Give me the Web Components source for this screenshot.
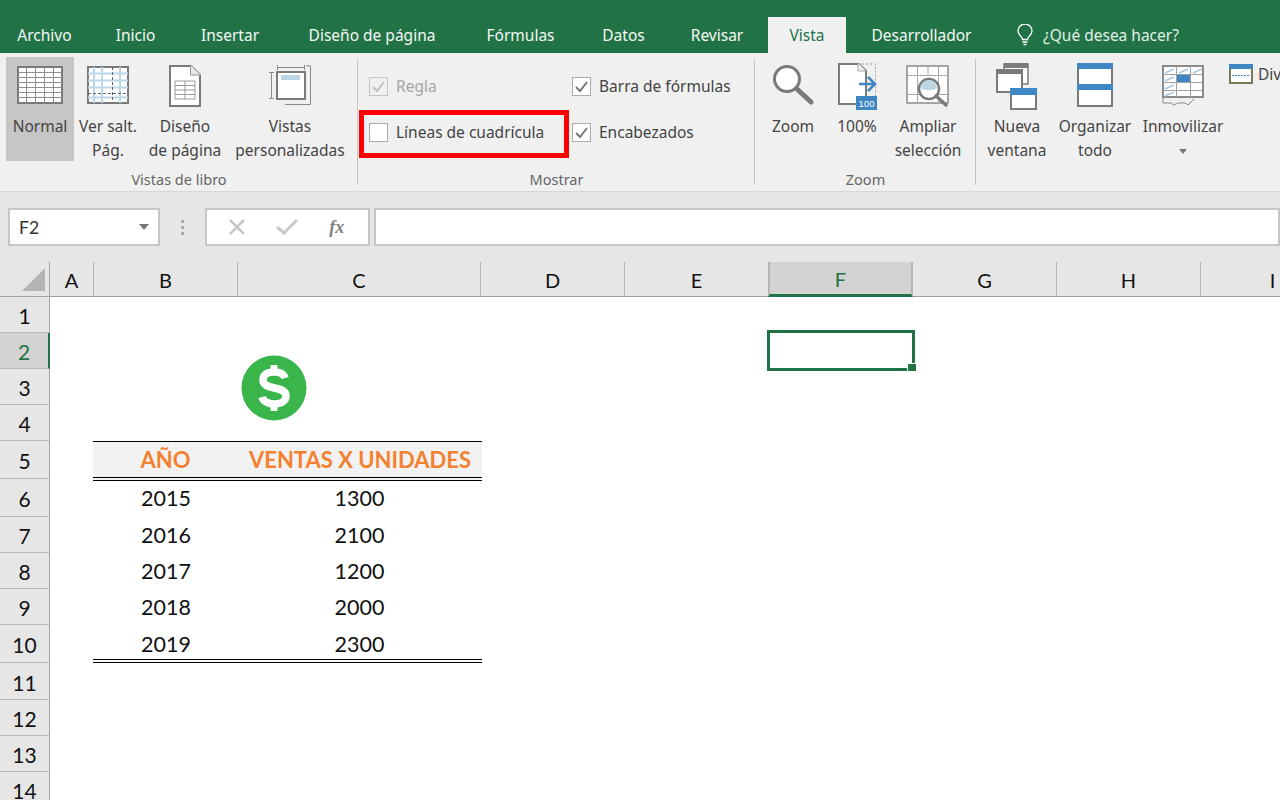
<!DOCTYPE html>
<html lang="es">
<head>
<meta charset="utf-8">
<title>Vista</title>
<style>
  html, body { margin: 0; height: 100%; overflow: hidden; background: #fff; }
  body { font-family: "Noto Sans", "Open Sans", sans-serif; display: flex; flex-direction: column; width: 1280px; height: 800px; }
  svg { display: block; }
</style>
</head>
<body>

<excel-tabs>
  <excel-tab w="89">Archivo</excel-tab>
  <excel-tab w="93">Inicio</excel-tab>
  <excel-tab w="96">Insertar</excel-tab>
  <excel-tab w="188">Diseño de página</excel-tab>
  <excel-tab w="109">Fórmulas</excel-tab>
  <excel-tab w="97">Datos</excel-tab>
  <excel-tab w="90">Revisar</excel-tab>
  <excel-tab w="78" active>Vista</excel-tab>
  <excel-tab w="151">Desarrollador</excel-tab>
  <excel-tab w="210" tell>¿Qué desea hacer?</excel-tab>
</excel-tabs>

<excel-ribbon>
  <ribbon-group label="Vistas de libro" w="358" pad="6">
    <ribbon-button w="68" selected>
      <svg slot="icon" width="46" height="50" viewBox="0 0 46 50">
        <rect x="1" y="7" width="44" height="36" fill="#fff" stroke="#7a7a7a" stroke-width="2"/>
        <path d="M9.500 7v36M18.500 7v36M27.500 7v36M36.500 7v36M1 12.500h44M1 17.500h44M1 22.500h44M1 27.500h44M1 32.500h44M1 37.500h44" stroke="#8f8f8f" fill="none"/>
      </svg>
      Normal
    </ribbon-button>
    <ribbon-button w="68">
      <svg slot="icon" width="42" height="50" viewBox="0 0 42 50">
        <rect x="1" y="7" width="40" height="36" fill="#fff" stroke="#7a7a7a" stroke-width="2"/>
        <path d="M7 7v36M15 7v36M33 7v36M1 13.500h40M1 20.500h40M1 27.500h40M1 37.500h40" stroke="#bcd6ea" stroke-width="2" fill="none"/>
        <path d="M25.500 7v36M1 33.500h40" stroke="#666" stroke-dasharray="3 2" fill="none"/>
      </svg>
      Ver salt.<br>Pág.
    </ribbon-button>
    <ribbon-button w="86">
      <svg slot="icon" width="32" height="50" viewBox="0 0 32 50">
        <path d="M1 6h21l9 9v31H1z" fill="#fff" stroke="#7a7a7a" stroke-width="2"/>
        <path d="M21.500 5v10h10" fill="#e8e8e8" stroke="#9a9a9a"/>
        <path d="M6 21h20v18H6zM6 25.500h20M6 30h20M6 34.500h20M16 21v18" fill="none" stroke="#9a9a9a"/>
      </svg>
      Diseño<br>de página
    </ribbon-button>
    <ribbon-button w="124">
      <svg slot="icon" width="42" height="50" viewBox="0 0 42 50">
        <path d="M8 7.500h28M8.500 5v5M35.500 5v5M2.500 13v25M0 12.500h5M0 38.500h5M16 44.500h25.500V6H37" fill="none" stroke="#8a8a8a"/>
        <rect x="8" y="12" width="28" height="27" fill="#fff" stroke="#7a7a7a" stroke-width="2"/>
        <rect x="12" y="15" width="19" height="5" fill="#bcd6e6"/>
      </svg>
      Vistas<br>personalizadas
    </ribbon-button>
  </ribbon-group>

  <ribbon-group label="Mostrar" w="397" checks>
    <ribbon-check checked disabled>Regla</ribbon-check>
    <ribbon-check checked>Barra de fórmulas</ribbon-check>
    <ribbon-check marked>Líneas de cuadrícula</ribbon-check>
    <ribbon-check checked>Encabezados</ribbon-check>
  </ribbon-group>

  <ribbon-group label="Zoom" w="221" pad="4">
    <ribbon-button w="68">
      <svg slot="icon" width="42" height="50" viewBox="0 0 42 50">
        <circle cx="15" cy="19" r="12.500" fill="#fff" stroke="#7a7a7a" stroke-width="3"/>
        <path d="M25 29l14 13" stroke="#7a7a7a" stroke-width="5" stroke-linecap="round"/>
      </svg>
      Zoom
    </ribbon-button>
    <ribbon-button w="60">
      <svg slot="icon" width="42" height="50" viewBox="0 0 42 50">
        <path d="M22 4h17.500v34" fill="none" stroke="#9a9a9a" stroke-dasharray="2 2"/>
        <path d="M3 4h20l7 7v33H3z" fill="#fff" stroke="#7a7a7a" stroke-width="2"/>
        <path d="M22 3v8h8" fill="#eee" stroke="#aaa"/>
        <path d="M23 24h15M32 17l7 7-7 7" fill="none" stroke="#3f87c4" stroke-width="2.500"/>
        <rect x="20" y="36" width="21" height="14" fill="#3f87c4"/>
        <text x="30.500" y="47" text-anchor="middle" font-size="9.500" font-family="Liberation Sans, sans-serif" fill="#fff">100</text>
      </svg>
      100%
    </ribbon-button>
    <ribbon-button w="82">
      <svg slot="icon" width="46" height="50" viewBox="0 0 46 50">
        <rect x="2" y="6" width="41" height="37" fill="#fff" stroke="#8a8a8a" stroke-width="1.500"/>
        <path d="M2 15.500h41M2 34.500h41M12.500 6v37M33.500 6v37M23 6v9" stroke="#a8a8a8" fill="none"/>
        <path d="M2 13v2.500" stroke="#8a8a8a"/>
        <circle cx="24" cy="29" r="10" fill="#fff" stroke="#7a7a7a" stroke-width="2.500"/>
        <path d="M16 28a8 8 0 0 1 16 0c-2 3-14 3-16 0z" fill="#bcd6e6"/>
        <path d="M31 36l10 9" stroke="#7a7a7a" stroke-width="3.500" stroke-linecap="round"/>
      </svg>
      Ampliar<br>selección
    </ribbon-button>
  </ribbon-group>

  <ribbon-group label="" w="304" pad="5" last>
    <ribbon-button w="72">
      <svg slot="icon" width="42" height="50" viewBox="0 0 42 50">
        <rect x="8" y="4" width="24" height="20" fill="#fff" stroke="#7a7a7a" stroke-width="1.500"/>
        <rect x="8" y="3" width="24" height="5" fill="#7a7a7a"/>
        <rect x="1" y="10" width="25" height="22" fill="#fff" stroke="#7a7a7a" stroke-width="2"/>
        <rect x="1" y="9" width="25" height="5" fill="#7a7a7a"/>
        <rect x="15" y="31" width="25" height="18" fill="#fff" stroke="#7a7a7a" stroke-width="2"/>
        <rect x="14" y="28" width="27" height="7" fill="#3f87c4"/>
      </svg>
      Nueva<br>ventana
    </ribbon-button>
    <ribbon-button w="84">
      <svg slot="icon" width="36" height="50" viewBox="0 0 36 50">
        <rect x="1" y="4" width="34" height="42" fill="#fff" stroke="#7a7a7a" stroke-width="2"/>
        <rect x="0" y="3" width="36" height="6" fill="#3f87c4"/>
        <rect x="0" y="24" width="36" height="6" fill="#3f87c4"/>
      </svg>
      Organizar<br>todo
    </ribbon-button>
    <ribbon-button w="92">
      <svg slot="icon" width="42" height="50" viewBox="0 0 42 50">
        <path d="M1 6h40v31H1z" fill="#fff" stroke="#8a8a8a" stroke-width="2"/>
        <rect x="15" y="15" width="13" height="7" fill="#3f87c4"/>
        <path d="M14.500 6v31M28.500 6v31M1 14.500h40M1 22.500h40M1 30.500h40" stroke="#a0a0a0" fill="none"/>
        <path d="M3 13l9-4M3 21l9-4M3 29l9-4M3 36l9-4M17 13l9-4M31 13l9-4" stroke="#a9c8de" stroke-width="1.500"/>
        <path d="M1 37v6h8l3 2 4-2h7l3 2 6-6" fill="none" stroke="#8a8a8a"/>
      </svg>
      Inmovilizar<br><svg style="display:inline-block;vertical-align:middle" width="8" height="5" viewBox="0 0 8 5"><path d="M0 0h8L4 5z" fill="#777"/></svg>
    </ribbon-button>
    <ribbon-small>
      <svg slot="icon" width="24" height="20" viewBox="0 0 24 20">
        <rect x="1" y="2" width="22" height="17" fill="#fff" stroke="#7a7a5a" stroke-width="2"/>
        <rect x="0" y="0" width="24" height="5" fill="#3f87c4"/>
        <path d="M3 11.500h18" stroke="#3f87c4" stroke-dasharray="2 1"/>
      </svg>
      Dividir
    </ribbon-small>
    <ribbon-small>
      <svg slot="icon" width="24" height="21" viewBox="0 0 24 21">
        <rect x="1" y="3" width="22" height="17" fill="#fff" stroke="#7a7a5a" stroke-width="1.500" stroke-dasharray="2 1"/>
        <rect x="0" y="0" width="24" height="5" fill="#3f87c4"/>
      </svg>
      Ocultar
    </ribbon-small>
    <ribbon-small disabled>
      <svg slot="icon" width="24" height="21" viewBox="0 0 24 21">
        <rect x="1" y="2" width="22" height="18" fill="#f6f6f6" stroke="#b4b4b4" stroke-width="2"/>
        <rect x="0" y="0" width="24" height="5" fill="#b4b4b4"/>
      </svg>
      Mostrar
    </ribbon-small>
  </ribbon-group>
</excel-ribbon>

<formula-bar cell="F2"></formula-bar>

<excel-sheet></excel-sheet>

<script>
// top green bar with the ribbon tabs
class ExcelTabs extends HTMLElement {
  constructor() {
    super();
    this.attachShadow({ mode: "open" });
    this.shadowRoot.innerHTML = `
      <style>
        :host { display: flex; align-items: flex-end; height: 53px; flex: none; background: #217346; }
      </style>
      <slot></slot>`;
  }
}

class ExcelTab extends HTMLElement {
  constructor() {
    super();
    this.attachShadow({ mode: "open" });
    this.shadowRoot.innerHTML = `
      <style>
        :host {
          display: flex; align-items: center; justify-content: center; box-sizing: border-box;
          height: 36px; color: #f4f8f5; font-size: 15.500px; white-space: nowrap; padding-bottom: 1px;
        }
        :host([active]) { background: #f0f0f0; color: #217346; margin-left: 6px; }
        :host([tell]) { justify-content: flex-start; padding-left: 20px; gap: 10px; color: #e4efe8; }
        svg { display: none; flex: none; }
        :host([tell]) svg { display: block; }
      </style>
      <svg width="16" height="22" viewBox="0 0 16 22" fill="none" stroke="#fff" stroke-width="1.300">
        <path d="M5.500 15.500c0-3-4.500-4.500-4.500-8.500a7 7 0 0 1 14 0c0 4-4.500 5.500-4.500 8.500z"/>
        <path d="M5.500 18h5M6.500 20.500h3"/>
      </svg>
      <slot></slot>`;
  }
  connectedCallback() {
    this.style.width = this.getAttribute("w") + "px";
  }
}

class ExcelRibbon extends HTMLElement {
  constructor() {
    super();
    this.attachShadow({ mode: "open" });
    this.shadowRoot.innerHTML = `
      <style>
        :host {
          display: flex; flex: none; height: 139px; box-sizing: border-box; overflow: hidden;
          background: #f0f0f0; border-bottom: 1px solid #d6d6d6; color: #444; font-size: 15.500px;
        }
      </style>
      <slot></slot>`;
  }
}

class RibbonGroup extends HTMLElement {
  constructor() {
    super();
    this.attachShadow({ mode: "open" });
    this.shadowRoot.innerHTML = `
      <style>
        :host {
          display: flex; flex-direction: column; flex: none; box-sizing: border-box;
          padding-top: 4px; position: relative;
        }
        :host::after {
          content: ""; position: absolute; right: 0; top: 6px; bottom: 6px; width: 1px; background: #c6c6c6;
        }
        :host([last])::after { display: none; }
        .items { display: flex; height: 104px; }
        :host([checks]) .items {
          display: grid; grid-template-columns: 203px 1fr; grid-auto-rows: 46px;
          padding: 6px 0 0 11px; box-sizing: border-box;
        }
        .label { height: 30px; line-height: 36px; text-align: center; font-size: 14.500px; color: #666; }
      </style>
      <div class="items"><slot></slot></div>
      <div class="label"></div>`;
  }
  connectedCallback() {
    this.style.width = this.getAttribute("w") + "px";
    const items = this.shadowRoot.querySelector(".items");
    if (this.hasAttribute("pad")) items.style.paddingLeft = this.getAttribute("pad") + "px";
    this.shadowRoot.querySelector(".label").textContent = this.getAttribute("label");
  }
}

class RibbonButton extends HTMLElement {
  constructor() {
    super();
    this.attachShadow({ mode: "open" });
    this.shadowRoot.innerHTML = `
      <style>
        :host {
          display: flex; flex-direction: column; align-items: center; flex: none;
          height: 104px; text-align: center; line-height: 24px; white-space: nowrap;
        }
        :host([selected]) { background: #c6c6c6; }
        .icon { height: 57px; padding-top: 3px; box-sizing: border-box; flex: none; }
      </style>
      <div class="icon"><slot name="icon"></slot></div>
      <div><slot></slot></div>`;
  }
  connectedCallback() {
    this.style.width = this.getAttribute("w") + "px";
  }
}

class RibbonSmall extends HTMLElement {
  constructor() {
    super();
    this.attachShadow({ mode: "open" });
    this.shadowRoot.innerHTML = `
      <style>
        :host {
          display: flex; align-items: center; gap: 5px; height: 34.500px;
          white-space: nowrap; color: #444;
        }
        :host([disabled]) { color: #aaa; }
      </style>
      <slot name="icon"></slot><slot></slot>`;
  }
}

customElements.define("ribbon-small", RibbonSmall);

class RibbonCheck extends HTMLElement {
  constructor() {
    super();
    this.attachShadow({ mode: "open" });
    this.shadowRoot.innerHTML = `
      <style>
        :host {
          display: flex; align-items: center; gap: 8px; position: relative; white-space: nowrap;
        }
        :host([disabled]) { color: #a6a6a6; }
        .box {
          width: 19px; height: 19px; box-sizing: border-box; flex: none;
          background: #fff; border: 1px solid #ababab;
        }
        :host([disabled]) .box { background: #f0f0f0; border-color: #c6c6c6; }
        .box svg { display: none; }
        :host([checked]) .box svg { display: block; }
        :host([marked])::after {
          content: ""; position: absolute; left: -10px; top: 1px; width: 210px; height: 48px;
          box-sizing: border-box; border: 5px solid #fe0000;
        }
      </style>
      <div class="box">
        <svg width="17" height="17" viewBox="0 0 17 17"><path d="M3 9l4 4 7-9" fill="none" stroke="#777" stroke-width="2"/></svg>
      </div>
      <slot></slot>`;
    if (this.hasAttribute("disabled")) this.shadowRoot.querySelector("path").setAttribute("stroke", "#c0c0c0");
  }
  connectedCallback() {
    if (this.hasAttribute("disabled")) this.shadowRoot.querySelector("path").setAttribute("stroke", "#c0c0c0");
  }
}

class FormulaBar extends HTMLElement {
  constructor() {
    super();
    this.attachShadow({ mode: "open" });
    this.shadowRoot.innerHTML = `
      <style>
        :host {
          display: flex; align-items: flex-start; flex: none; height: 70px; box-sizing: border-box;
          background: #e6e6e6; padding: 16px 0 0 8px; color: #444;
        }
        .box { height: 38px; box-sizing: border-box; background: #fff; border: 2px solid #c6c6c6; display: flex; align-items: center; }
        .name { width: 153px; padding: 0 9px; justify-content: space-between; font: 17.500px Lato, "Liberation Sans", sans-serif; color: #333; }
        .dots { width: 45px; display: flex; flex-direction: column; align-items: center; gap: 3px; padding-top: 12px; box-sizing: border-box; }
        .dots i { width: 3px; height: 3px; background: #aaa; }
        .btns { width: 165px; position: relative; justify-content: space-around; padding: 0 8px 0 5px; }
        .fx { font: italic bold 18px "Liberation Serif", serif; color: #808080; }
        .input { width: 910px; margin-left: 4px; }
      </style>
      <div class="box name"><span></span><svg width="10" height="6" viewBox="0 0 10 6"><path d="M0 0h10L5 6z" fill="#777"/></svg></div>
      <div class="dots"><i></i><i></i><i></i></div>
      <div class="box btns">
        <svg width="18" height="18" viewBox="0 0 18 18"><path d="M2 2l14 14M16 2L2 16" stroke="#c8c8c8" stroke-width="2.500"/></svg>
        <svg width="22" height="18" viewBox="0 0 22 18"><path d="M1 9l7 6L21 2" fill="none" stroke="#c8c8c8" stroke-width="3"/></svg>
        <span class="fx">fx</span>
      </div>
      <div class="box input"></div>`;
  }
  connectedCallback() {
    this.shadowRoot.querySelector(".name span").textContent = this.getAttribute("cell");
  }
}

const COLS = ["A", "B", "C", "D", "E", "F", "G", "H", "I"];
const COL_W = [44, 144, 243, 144, 144, 144, 144, 144, 144];
const ROW_H = [36, 36, 36, 36, 38, 38, 36, 36, 36, 38, 37, 36, 36, 36];
const DATA = [
  [6, "2015", "1300"], [7, "2016", "2100"], [8, "2017", "1200"], [9, "2018", "2000"], [10, "2019", "2300"]
];

class ExcelSheet extends HTMLElement {
  constructor() {
    super();
    this.attachShadow({ mode: "open" });
    const colHeads = COLS.map((c, i) =>
      `<div class="ch${c === "F" ? " sel" : ""}" style="grid-area:1/${i + 2}">${c}</div>`).join("");
    const rowHeads = ROW_H.map((h, i) =>
      `<div class="rh${i === 1 ? " sel" : ""}" style="grid-area:${i + 2}/1">${i + 1}</div>`).join("");
    const cells = DATA.map(([r, y, v]) => {
      const end = r === 10 ? " end" : "";
      return `<div class="c${end}" style="grid-area:${r + 1}/3">${y}</div><div class="c${end} cc" style="grid-area:${r + 1}/4">${v}</div>`;
    }).join("");
    this.shadowRoot.innerHTML = `
      <style>
        :host { display: block; flex: none; height: 538px; overflow: hidden; position: relative; background: #fff; }
        .grid {
          display: grid; width: 1345px; font: 21.500px Lato, "Liberation Sans", sans-serif; color: #111;
          grid-template-columns: 50px ${COL_W.map(w => w + "px").join(" ")};
          grid-template-rows: 35px ${ROW_H.map(h => h + "px").join(" ")};
        }
        .corner { grid-area: 1/1; background: #e6e6e6; border-right: 1px solid #a6a6a6; border-bottom: 1px solid #a0a0a0; position: relative; }
        .corner::after {
          content: ""; position: absolute; left: 22px; top: 6px; width: 23px; height: 23px;
          background: #b4b4b4; clip-path: polygon(100% 0, 100% 100%, 0 100%);
        }
        .ch {
          background: #e6e6e6; border-bottom: 1px solid #a0a0a0; border-right: 1px solid #b4b4b4;
          display: flex; align-items: center; justify-content: center; box-sizing: border-box; padding-top: 2px; font-size: 20px;
        }
        .ch.sel { background: #d2d2d2; color: #217346; border-bottom: 3px solid #217346; border-right: 2px solid #b4b4b4; border-left: 2px solid #b4b4b4; margin-left: -1px; }
        .rh {
          background: #e6e6e6; border-right: 1px solid #a6a6a6; border-bottom: 1px solid #b8b8b8;
          display: flex; align-items: center; justify-content: center; box-sizing: border-box; font-size: 21px; padding-top: 2px;
        }
        .rh.sel { background: #d2d2d2; color: #217346; border-right: 2px solid #217346; }
        .c { display: flex; align-items: center; justify-content: center; }
        .end { border-bottom: 4px double #000; margin: 0 -1px 0 -1px; padding-top: 4px; box-sizing: border-box; }
        .h {
          display: flex; align-items: center; justify-content: center; box-sizing: border-box; height: 40px;
          background: #f2f2f2; color: #f48130; font-weight: bold; font-size: 22px;
          border-top: 1px solid #000; border-bottom: 4px double #000; white-space: nowrap;
        }
        .selection {
          position: absolute; left: 767px; top: 68px; width: 148px; height: 41px; box-sizing: border-box;
          border: 3px solid #217346;
        }
        .selection::after {
          content: ""; position: absolute; right: -5px; bottom: -4px; width: 8px; height: 7px;
          background: #217346; border: 1px solid #fff;
        }
        .dollar { position: absolute; left: 241px; top: 93px; }
      </style>
      <div class="grid">
        <div class="corner"></div>
        ${colHeads}
        ${rowHeads}
        <div class="h" style="grid-area:6/3;margin-left:-1px">AÑO</div>
        <div class="h" style="grid-area:6/4;margin-right:-1px">VENTAS X UNIDADES</div>
        ${cells}
      </div>
      <svg class="dollar" width="66" height="66" viewBox="0 0 66 66">
        <circle cx="33" cy="33" r="32.500" fill="#39b54a"/>
        <path d="M44 23c-1-4-5-6-11-6-7 0-11 3-11 8 0 11 23 5 23 16 0 5-5 8-12 8-6 0-11-3-12-7" fill="none" stroke="#fff" stroke-width="7.500"/>
        <path d="M33 10v46" stroke="#fff" stroke-width="7" stroke-dasharray="8 30"/>
      </svg>
      <div class="selection"></div>`;
  }
}

customElements.define("excel-tabs", ExcelTabs);
customElements.define("excel-tab", ExcelTab);
customElements.define("excel-ribbon", ExcelRibbon);
customElements.define("ribbon-group", RibbonGroup);
customElements.define("ribbon-button", RibbonButton);
customElements.define("ribbon-check", RibbonCheck);
customElements.define("formula-bar", FormulaBar);
customElements.define("excel-sheet", ExcelSheet);
</script>
</body>
</html>
